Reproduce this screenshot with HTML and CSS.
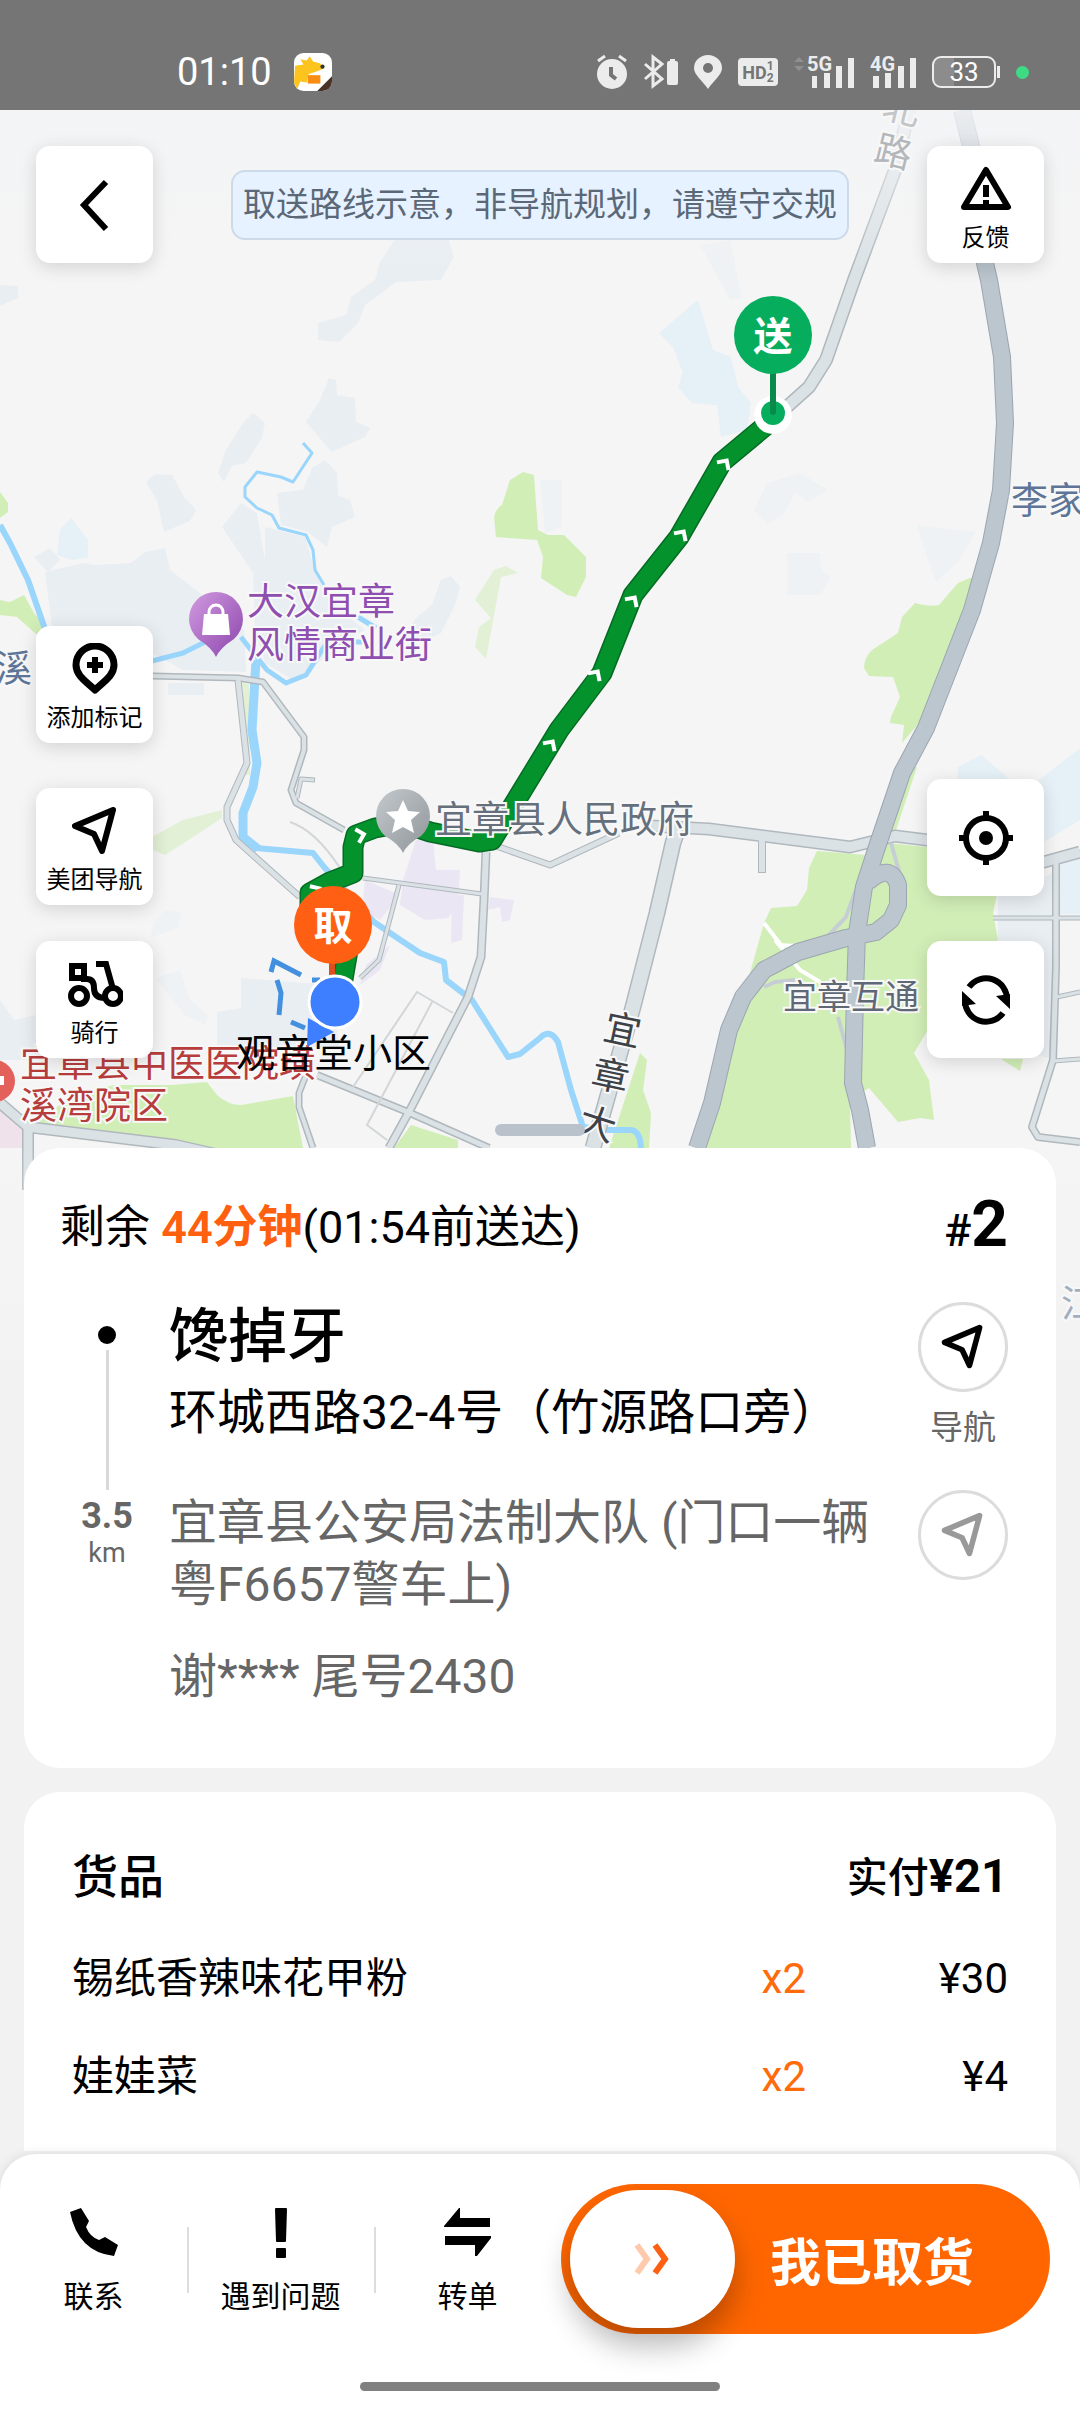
FILE: index.html
```html
<!DOCTYPE html>
<html lang="zh-CN">
<head>
    <meta charset="UTF-8">
    <meta name="viewport" content="width=device-width, initial-scale=1.0">
    <title>配送详情</title>
    <link rel="stylesheet" href="styles.css">
</head>
<body>
    <svg class="symbols" aria-hidden="true">
        <symbol id="icon-send" viewBox="0 0 56 52">
            <path d="M46 5 L8 21 L27 29 L35 46 Z" fill="none" stroke="currentColor" stroke-width="6" stroke-linejoin="round"/>
        </symbol>
    </svg>

    <!-- 状态栏 -->
    <header class="status-bar">
        <span class="clock">01:10</span>
        <svg class="app-icon" viewBox="0 0 36 36">
            <rect width="36" height="36" rx="9" fill="#fff"/>
            <path d="M1 12 L9 11 L6 6 L12 7 L15 3 L18 8 L25 10 L28 15 L20 18 L14 20 L13 23 L12 28 L6 27 L3 34 L0 28 Z" fill="#fcc41c"/>
            <rect x="13" y="21" width="12" height="8" fill="#f98c13"/>
            <circle cx="27" cy="13" r="2" fill="#333"/>
            <path d="M36 22 L22 36 H27 A9 9 0 0 0 36 27 Z" fill="#4a3228"/>
        </svg>
        <div class="status-icons">
            <svg width="32" height="36" viewBox="0 0 32 36">
                <circle cx="16" cy="20" r="15" fill="#ececec"/>
                <path d="M2 7 L9 2 M30 7 L23 2" stroke="#ececec" stroke-width="3"/>
                <path d="M15 13 V21 L20 25" fill="none" stroke="#757575" stroke-width="4"/>
            </svg>
            <svg width="34" height="36" viewBox="0 0 34 36">
                <path d="M1 10 L18 25 L9 32 V3 L18 10 L1 25" fill="none" stroke="#ececec" stroke-width="3"/>
                <rect x="23" y="7" width="11" height="24" rx="2" fill="#ececec"/>
                <rect x="26" y="5" width="5" height="3" fill="#ececec"/>
            </svg>
            <svg width="28" height="36" viewBox="0 0 28 36">
                <path d="M14 35 C8 26 0 21 0 14 A14 13 0 0 1 28 14 C28 21 20 26 14 35 Z" fill="#ececec"/>
                <circle cx="14" cy="14" r="5" fill="#757575"/>
            </svg>
            <span class="hd-badge">HD<span class="hd-sims"><span>1</span><span>2</span></span></span>
            <svg class="signal" width="60" height="36" viewBox="0 0 60 36">
                <path d="M0 8 L5 3 L10 8 Z M0 12 L5 17 L10 12 Z" fill="#8f8f8f"/>
                <path d="M18 22 h5 v12 h-5 z M30 19 h6 v15 h-6 z M42 12 h6 v22 h-6 z M54 4 h6 v30 h-6 z" fill="#ececec"/>
                <text x="13" y="17" class="net">5G</text>
            </svg>
            <svg class="signal" width="46" height="36" viewBox="0 0 46 36">
                <path d="M3 22 h6 v12 h-6 z M15 19 h6 v15 h-6 z M28 12 h6 v22 h-6 z M40 4 h6 v30 h-6 z" fill="#ececec"/>
                <text x="0" y="17" class="net">4G</text>
            </svg>
            <span class="battery">33</span>
            <span class="mic-dot"></span>
        </div>
    </header>

    <main class="content">
        <!-- 地图底图 -->
        <svg class="map" viewBox="0 110 1080 1490" preserveAspectRatio="xMidYMin slice">
            <defs>
                <linearGradient id="purplePin" x1="0" y1="0" x2="1" y2="1">
                    <stop offset="0" stop-color="#d29be0"/>
                    <stop offset="1" stop-color="#8b45ac"/>
                </linearGradient>
                <linearGradient id="grayPin" x1="0" y1="0" x2="1" y2="1">
                    <stop offset="0" stop-color="#c3c9cd"/>
                    <stop offset="1" stop-color="#8f9599"/>
                </linearGradient>
                <linearGradient id="topFade" x1="0" y1="0" x2="0" y2="1">
                    <stop offset="0" stop-color="#f3f4f6" stop-opacity=".85"/>
                    <stop offset="1" stop-color="#f3f4f6" stop-opacity="0"/>
                </linearGradient>
                <linearGradient id="bottomFade" x1="0" y1="0" x2="0" y2="1">
                    <stop offset="0" stop-color="#f2f2f2" stop-opacity="0"/>
                    <stop offset="1" stop-color="#f2f2f2"/>
                </linearGradient>
            </defs>
            <rect y="110" width="1080" height="1490" fill="#f5f5f5"/>

            <!-- 居民区 -->
            <g fill="#e9eef3">
                <path d="M396 238 L448 238 L454 257 L441 280 L396 282 L365 305 L358 323 L339 342 L318 340 L318 323 L346 315 L351 297 L375 280 L380 262 Z"/>
                <path d="M320 400 L329 378 L336 380 L337 395 L355 398 L356 422 L370 428 L365 437 L332 452 L306 422 Z"/>
                <path d="M243 423 L253 413 L265 423 L262 438 L246 463 L232 466 L224 482 L218 473 L226 450 Z"/>
                <path d="M146 482 L155 474 L172 475 L184 497 L196 510 L190 521 L164 532 L157 500 Z"/>
                <path d="M325 460 L337 473 L338 495 L350 500 L355 517 L332 527 L327 547 L308 532 L281 525 L277 493 L303 490 L312 468 Z"/>
                <path d="M241 503 L257 513 L265 560 L265 527 L305 537 L315 570 L344 613 L365 630 L340 643 L322 660 L293 680 L265 663 L255 630 L253 573 L222 527 Z"/>
                <path d="M45 572 L83 563 L95 565 L131 563 L145 552 L165 548 L170 570 L213 603 L244 630 L246 672 L183 670 L152 653 L52 627 Z"/>
                <path d="M34 557 L50 548 L60 560 L48 572 Z"/>
                <path d="M441 580 L451 576 L460 587 L455 605 L441 633 L424 642 L400 640 L417 617 L432 605 Z"/>
                <path d="M168 683 h36 v12 h-36 z"/>
                <path d="M0 285 L18 286 L18 298 L0 306 Z"/>
                <path d="M241 978 L330 985 L340 1050 L217 1045 L217 1012 L241 1008 Z"/>
                <path d="M0 1000 L14 1020 L36 1015 L36 1060 L0 1060 Z"/>
                <path d="M998 897 L1055 872 V1060 L1020 1050 L998 940 Z"/>
            </g>
            <g fill="#eff2f4">
                <path d="M540 480 h22 v47 l-17 6 z"/>
                <path d="M754 510 L767 483 L800 473 L828 490 L808 502 L795 493 L783 515 L768 524 Z"/>
                <path d="M787 553 H820 L822 570 L831 577 L820 595 H787 Z"/>
                <path d="M917 525 L976 532 L958 562 L936 582 L928 560 Z"/>
                <path d="M700 245 L730 240 L742 298 L730 300 Z"/>
                <path d="M155 978 L180 970 L190 1000 L208 1015 L205 1025 L185 1015 Z"/>
                <path d="M155 920 L165 910 L182 912 L178 928 L150 938 Z"/>
            </g>
            <g fill="#e6f0f7">
                <path d="M659 333 L698 300 L709 337 L713 350 L731 357 L738 387 L751 403 L747 430 L721 437 L717 405 L692 403 L678 387 L683 373 L673 347 Z"/>
                <path d="M71 518 L88 540 V558 L72 560 L57 555 L60 530 Z"/>
                <path d="M958 767 L981 755 L1008 778 V800 H958 Z"/>
                <path d="M1039 780 L1080 748 V820 L1044 842 Z"/>
                <path d="M1059 864 L1080 858 V914 H1059 Z"/>
            </g>
            <path d="M0 1095 L26 1128 V1148 H0 Z" fill="#f0e2ea"/>

            <!-- 绿地 -->
            <g fill="#d2eeb7">
                <path d="M494 517 Q496 508 502 505 L510 480 L523 472 L534 475 L538 530 L548 535 L564 535 L586 557 V577 L576 597 L567 595 L541 578 L543 557 L537 540 L496 537 Z"/>
                <path d="M0 492 L8 503 L8 512 L0 518 Z"/>
                <path d="M0 600 L10 602 L24 595 L34 613 L50 630 L36 634 L17 617 L0 615 Z"/>
                <path d="M114 1085 L172 1085 L207 1082 L217 1095 Q228 1105 241 1105 L293 1096 L303 1148 H207 L176 1140 L38 1123 L69 1097 Z"/>
                <path d="M411 1125 L458 1140 V1148 H394 Z"/>
                <path d="M640 1053 L647 1060 L643 1090 L651 1113 L649 1148 H609 Z"/>
                <path d="M970 578 L958 583 L939 605 Q930 607 915 603 L902 617 L898 633 L872 650 Q864 658 864 668 L869 676 L893 677 L900 697 L891 717 L890 723 L904 725 L902 743 L930 710 L985 580 Z"/>
                <path d="M917 767 L896 830 L888 845 L884 838 L905 770 Z"/>
                <path d="M817 851 L867 855 L888 843 L927 847 L998 890 L993 913 L998 940 L926 1033 L914 1053 L929 1080 L934 1120 L920 1118 L898 1122 L869 1088 L850 1100 L851 1148 H705 L736 1033 L750 973 L764 923 L771 908 L797 906 L807 890 L809 868 Z"/>
                <path d="M1001 1059 L1020 1071 L1023 1059 Z"/>
            </g>
            <g fill="#e2f0d5">
                <path d="M494 570 L506 566 L518 573 L501 577 L486 659 L475 647 L479 627 L491 618 L475 600 Z"/>
                <path d="M152 837 L183 820 L222 810 V818 L193 837 L165 855 L153 850 Z"/>
                <path d="M242 682 L249 684 L250 775 L246 775 Z"/>
            </g>

            <!-- 商业区 -->
            <g fill="#ebe6f4">
                <path d="M416 840 L433 838 L436 870 L460 870 L458 905 L448 918 L425 920 L400 905 L403 880 Z"/>
                <path d="M452 895 L464 895 L462 940 L451 943 Z"/>
                <path d="M490 897 L514 900 L510 920 L502 922 L500 907 L488 910 Z"/>
                <path d="M365 880 L400 895 L380 920 L362 910 Z"/>
                <path d="M366 965 L390 945 L380 970 L360 985 Z"/>
            </g>

            <!-- 河流 -->
            <g fill="none" stroke="#9ad5fb" stroke-linejoin="round">
                <path d="M0 525 L10 543 L28 580 L46 632" stroke-width="6"/>
                <path d="M303 443 L312 453 L293 482 L281 477 L257 472 L245 487 V497 L257 508 L272 515 L279 528 L306 535 L313 550 L315 570 L324 585" stroke-width="3"/>
                <path d="M152 661 L183 653 L205 642 M241 637 L251 650 L267 670 L286 683 L306 675 L324 647 L340 642 L362 642 M358 617 L376 628" stroke-width="5"/>
                <path d="M256 660 L252 730 L257 763 L253 787 L243 813 L243 837 L258 849" stroke-width="9"/>
                <path d="M256 848 L313 853 L324 867 L374 922 L396 937 L420 953 L444 962 L446 980 L472 1000 L489 1027 L508 1057 L520 1054 L540 1038 Q550 1028 558 1042 L571 1090 L583 1127 L609 1130 H630 Q640 1130 641 1148" stroke-width="6"/>
            </g>

            <!-- 普通道路：先描边再填充 -->
            <g fill="none" stroke="#b0b8bd" stroke-linejoin="round">
                <path d="M909 110 L895 170 L854 280 L826 360 L809 387 L780 413" stroke-width="14"/>
                <path d="M678 828 L673 843 L657 913 L633 1007 L593 1148" stroke-width="17"/>
                <path d="M650 826 L709 829 L850 847 L895 836 L927 840 L1044 862 L1080 852" stroke-width="13"/>
                <path d="M762 842 V873" stroke-width="8"/>
                <path d="M619 833 L550 865 L499 847 L470 838" stroke-width="7"/>
                <path d="M152 676 L238 678 L263 682 L304 737 V750 L291 790 L296 803 L344 830" stroke-width="7"/>
                <path d="M238 680 L247 763 L227 807 V820 L236 840 L300 897" stroke-width="7"/>
                <path d="M297 798 L301 779 L315 780" stroke-width="5"/>
                <path d="M486 852 L484 900 L481 957 L468 997 L410 1110 L389 1148" stroke-width="9"/>
                <path d="M317 1075 L410 1113 L489 1148" stroke-width="8"/>
                <path d="M308 1070 L299 1093 V1107 L313 1148" stroke-width="7"/>
                <path d="M363 878 L482 894 M399 885 L379 960 L360 978" stroke-width="5"/>
                <path d="M0 1103 L28 1127 L69 1132 L176 1145 L220 1155 M28 1127 V1190" stroke-width="12"/>
                <path d="M1056 863 V967 L1053 1060 L1032 1127 L1038 1137 L1080 1142" stroke-width="8"/>
                <path d="M993 918 H1080 M1057 997 L1080 992 M1053 1061 L1080 1059" stroke-width="5"/>
            </g>
            <g fill="none" stroke="#dbe2e6" stroke-linejoin="round">
                <path d="M909 110 L895 170 L854 280 L826 360 L809 387 L780 413" stroke-width="11"/>
                <path d="M678 828 L673 843 L657 913 L633 1007 L593 1148" stroke-width="14"/>
                <path d="M650 826 L709 829 L850 847 L895 836 L927 840 L1044 862 L1080 852" stroke-width="10"/>
                <path d="M762 840 V872" stroke-width="6"/>
                <path d="M619 833 L550 865 L499 847 L470 838" stroke-width="5"/>
                <path d="M152 676 L238 678 L263 682 L304 737 V750 L291 790 L296 803 L344 830" stroke-width="4"/>
                <path d="M238 680 L247 763 L227 807 V820 L236 840 L300 897" stroke-width="5"/>
                <path d="M297 798 L301 779 L314 780" stroke-width="3"/>
                <path d="M486 852 L484 900 L481 957 L468 997 L410 1110 L389 1148" stroke-width="6"/>
                <path d="M317 1075 L410 1113 L489 1148" stroke-width="5"/>
                <path d="M308 1070 L299 1093 V1107 L313 1148" stroke-width="4"/>
                <path d="M363 878 L482 894 M399 885 L379 960 L360 978" stroke-width="3"/>
                <path d="M0 1103 L28 1127 L69 1132 L176 1145 L220 1155 M28 1127 V1190" stroke-width="9"/>
                <path d="M1056 863 V967 L1053 1060 L1032 1127 L1038 1137 L1080 1142" stroke-width="5"/>
                <path d="M993 918 H1080 M1057 997 L1080 992 M1053 1061 L1080 1059" stroke-width="3"/>
            </g>
            <g fill="none" stroke="#d3d6d8" stroke-width="2">
                <path d="M453 1013 L417 992 L353 1087 M432 1002 L367 1125 L387 1140"/>
                <path d="M290 822 Q315 830 340 868"/>
            </g>
            <g fill="none" stroke="#fff" stroke-width="4">
                <path d="M764 923 L781 945 Q805 948 826 938 M775 940 L800 970 L820 982"/>
            </g>
            <g fill="none" stroke="#c6ced4" stroke-width="4">
                <path d="M862 873 L846 917 L826 938 M891 843 L901 878 M764 987 L775 982 L795 980 M838 1017 L847 1050"/>
            </g>

            <!-- 高速 -->
            <g fill="none" stroke="#9ba6b1" stroke-width="18" stroke-linejoin="round">
                <path d="M962 110 L971 146 L985 263 L989 280 L1002 357 L1005 423 L1001 490 L991 543 L972 610 L926 728 L902 773 L876 850 L864 887 L857 933 L855 993 L853 1083 L860 1110 L867 1148"/>
                <path d="M868 882 Q890 862 898 885 V905 L891 920 L876 932 L846 938 L798 952 L764 970 L743 997 L729 1030 L712 1103 L697 1148"/>
            </g>
            <g fill="none" stroke="#bcc6cf" stroke-width="16" stroke-linejoin="round">
                <path d="M962 110 L971 146 L985 263 L989 280 L1002 357 L1005 423 L1001 490 L991 543 L972 610 L926 728 L902 773 L876 850 L864 887 L857 933 L855 993 L853 1083 L860 1110 L867 1148"/>
                <path d="M868 882 Q890 862 898 885 V905 L891 920 L876 932 L846 938 L798 952 L764 970 L743 997 L729 1030 L712 1103 L697 1148"/>
            </g>

            <!-- 小区边界 -->
            <g fill="none" stroke="#4390df" stroke-width="5">
                <path d="M271 972 L274 961 L301 975 M277 980 L281 993 L279 1015 M291 1022 L305 1028 M312 980 L320 980"/>
            </g>

            <!-- 配送路线 -->
            <g fill="none" stroke-linejoin="round" stroke-linecap="round">
                <path d="M773 418 L764 427 L722 462 L679 537 L633 595 L602 673 L559 730 L492 840 L479 842 L430 832 L403 823 L375 828 L356 835 L353 847 V873 L330 882 L310 893 V925 L351 933 L342 985" stroke="#056b24" stroke-width="21"/>
                <path d="M773 418 L764 427 L722 462 L679 537 L633 595 L602 673 L559 730 L492 840 L479 842 L430 832 L403 823 L375 828 L356 835 L353 847 V873 L330 882 L310 893 V925 L351 933 L342 985" stroke="#04922c" stroke-width="18"/>
            </g>
            <g fill="none" stroke="#fff" stroke-width="4">
                <path d="M-4 -7 L3 0 L-4 7" transform="translate(725 463) rotate(-56)"/>
                <path d="M-4 -7 L3 0 L-4 7" transform="translate(682 534) rotate(-56)"/>
                <path d="M-4 -7 L3 0 L-4 7" transform="translate(633 600) rotate(-56)"/>
                <path d="M-4 -7 L3 0 L-4 7" transform="translate(596 674) rotate(-56)"/>
                <path d="M-4 -7 L3 0 L-4 7" transform="translate(551 744) rotate(-56)"/>
                <path d="M-4 -7 L3 0 L-4 7" transform="translate(361 835) rotate(-15)"/>
                <path d="M-4 -7 L3 0 L-4 7" transform="translate(317 890) rotate(-32)"/>
            </g>

            <rect y="110" width="1080" height="160" fill="url(#topFade)"/>
            <rect y="1148" width="1080" height="240" fill="url(#bottomFade)"/>
            <rect y="1387" width="1080" height="213" fill="#f2f2f2"/>

            <!-- 地名 -->
            <g class="labels">
                <text x="247" y="615" fill="#8e4fb0">大汉宜章</text>
                <text x="247" y="658" fill="#8e4fb0">风情商业街</text>
                <text x="435" y="833" fill="#66707c">宜章县人民政府</text>
                <text x="1011" y="514" fill="#5f7597">李家</text>
                <text x="-5" y="682" fill="#5f7597">溪</text>
                <text x="783" y="1009" fill="#5f6975" class="small">宜章互通</text>
                <text x="-18" y="13" fill="#3c4248" transform="translate(622 1030) rotate(12)">宜</text>
                <text x="-18" y="13" fill="#3c4248" transform="translate(610 1076) rotate(12)">章</text>
                <text x="-18" y="13" fill="#3c4248" transform="translate(597 1124) rotate(18)">大</text>
                <text x="-18" y="13" fill="#c3c6c9" transform="translate(901 109) rotate(14)">北</text>
                <text x="-18" y="13" fill="#b3b7ba" transform="translate(893 152) rotate(14)">路</text>
                <text x="20" y="1077" fill="#b73c3c">宜章县中医医院璜</text>
                <text x="20" y="1119" fill="#b73c3c">溪湾院区</text>
                <text x="1061" y="1317" fill="#a3aec1">江</text>
            </g>

            <!-- 兴趣点 -->
            <path d="M216 657 Q212 648 198 639 A27 27 0 1 1 234 639 Q220 648 216 657 Z" fill="url(#purplePin)"/>
            <path d="M204 614 h24 l2 21 h-28 z" fill="#fff"/>
            <path d="M209 615 v-3 a7 7 0 0 1 14 0 v3" fill="none" stroke="#fff" stroke-width="3"/>
            <path d="M403 853 Q399 844 385 836 A27 27 0 1 1 421 836 Q407 844 403 853 Z" fill="url(#grayPin)"/>
            <path d="M403 800 L408 811 L420 812 L411 820 L414 833 L403 827 L392 833 L395 820 L386 812 L398 811 Z" fill="#fff"/>
            <circle cx="-6" cy="1081" r="21" fill="#e4605a"/>
            <rect x="-8" y="1076" width="12" height="9" fill="#fff"/>

            <!-- 送达点 -->
            <circle cx="773" cy="415" r="19" fill="#fff"/>
            <circle cx="773" cy="413" r="12" fill="#06ad5d"/>
            <path d="M773 370 V412" stroke="#0a8a4a" stroke-width="6" stroke-linecap="round"/>
            <circle cx="773" cy="335" r="39" fill="#06ad5d"/>
            <text x="773" y="350" class="pin-text">送</text>

            <!-- 取货点和当前位置 -->
            <path d="M332 960 V985" stroke="#dd4f1c" stroke-width="6"/>
            <circle cx="333" cy="925" r="39" fill="#ff5f13"/>
            <text x="333" y="940" class="pin-text">取</text>
            <text x="236" y="1067" class="area-name">观音堂小区</text>
            <path d="M308 1018 L307 1047 L334 1032 Z" fill="#3d7fff"/>
            <circle cx="335" cy="1002" r="26" fill="#3d7fff" stroke="#fff" stroke-width="3"/>
        </svg>

        <!-- 地图上的控件 -->
        <div class="map-tools">
            <div class="top-row">
                <button class="tool tool-plain" aria-label="返回">
                    <svg width="56" height="56" viewBox="0 0 56 56"><path d="M39 5 L17 28 L39 52" fill="none" stroke="#000" stroke-width="6"/></svg>
                </button>
                <p class="notice">取送路线示意，非导航规划，请遵守交规</p>
                <button class="tool">
                    <svg width="56" height="52" viewBox="0 0 56 52">
                        <path d="M28 7 L50 44 H6 Z" fill="none" stroke="#000" stroke-width="6" stroke-linejoin="round"/>
                        <path d="M28 22 V34 M28 37 V44" stroke="#000" stroke-width="6"/>
                    </svg>
                    <span>反馈</span>
                </button>
            </div>
            <div class="side-row">
                <div class="side-left">
                    <button class="tool">
                        <svg width="56" height="52" viewBox="0 0 56 52">
                            <path d="M28 47 C20 39 9 33 9 22 A19 19 0 0 1 47 22 C47 33 36 39 28 47 Z" fill="none" stroke="#000" stroke-width="7" stroke-linejoin="round"/>
                            <path d="M28 14 V30 M20 22 H36" stroke="#000" stroke-width="6"/>
                        </svg>
                        <span>添加标记</span>
                    </button>
                    <div class="side-group">
                        <button class="tool">
                            <svg width="56" height="52"><use href="#icon-send"/></svg>
                            <span>美团导航</span>
                        </button>
                        <button class="tool">
                            <svg width="56" height="52" viewBox="0 0 56 52">
                                <g fill="none" stroke="#000" stroke-width="6">
                                    <rect x="5" y="8" width="12" height="12"/>
                                    <circle cx="12" cy="38" r="8"/>
                                    <circle cx="46" cy="38" r="8"/>
                                    <path d="M14 21 H20 Q27 21 27 30 Q27 40 38 40 M29 6 H39 L46 31"/>
                                </g>
                            </svg>
                            <span>骑行</span>
                        </button>
                    </div>
                </div>
                <div class="side-right">
                    <button class="tool tool-plain" aria-label="定位">
                        <svg width="56" height="56" viewBox="0 0 56 56">
                            <circle cx="28" cy="28" r="20" fill="none" stroke="#000" stroke-width="6"/>
                            <circle cx="28" cy="28" r="7"/>
                            <path d="M28 1 V9 M28 47 V55 M1 28 H9 M47 28 H55" stroke="#000" stroke-width="6"/>
                        </svg>
                    </button>
                    <button class="tool tool-plain" aria-label="刷新">
                        <svg width="56" height="56" viewBox="-28 -28 56 56">
                            <path d="M-17 -13 A21 21 0 0 1 21 0 M17 13 A21 21 0 0 1 -21 0" fill="none" stroke="#000" stroke-width="6"/>
                            <path d="M10 -4 L24 9 V-6 Z M-10 4 L-24 -9 V6 Z"/>
                        </svg>
                    </button>
                </div>
            </div>
            <div class="sheet-handle"></div>
        </div>

        <!-- 订单卡片 -->
        <section class="card order-card">
            <div class="order-head">
                <p>剩余 <strong>44分钟</strong>(01:54前送达)</p>
                <p class="order-no">#<b>2</b></p>
            </div>
            <div class="stop">
                <div class="rail">
                    <span class="rail-dot"></span>
                    <span class="rail-line"></span>
                </div>
                <div class="stop-body pickup">
                    <h1>馋掉牙</h1>
                    <p>环城西路32-4号（竹源路口旁）</p>
                </div>
                <div class="stop-nav">
                    <button class="nav-btn" aria-labelledby="nav-label"><svg width="52" height="48"><use href="#icon-send"/></svg></button>
                    <span id="nav-label">导航</span>
                </div>
            </div>
            <div class="stop">
                <div class="rail distance">
                    <b>3.5</b>
                    <span>km</span>
                </div>
                <div class="stop-body dropoff">
                    <p>宜章县公安局法制大队 (门口一辆粤F6657警车上)</p>
                    <p class="customer">谢**** 尾号2430</p>
                </div>
                <div class="stop-nav">
                    <button class="nav-btn nav-btn-gray" aria-label="导航到送达点"><svg width="52" height="48"><use href="#icon-send"/></svg></button>
                </div>
            </div>
        </section>

        <!-- 货品卡片 -->
        <section class="card goods-card">
            <div class="goods-head">
                <h2>货品</h2>
                <p>实付<b>¥21</b></p>
            </div>
            <table class="goods">
                <tr>
                    <td>锡纸香辣味花甲粉</td>
                    <td class="qty">x2</td>
                    <td class="price">¥30</td>
                </tr>
                <tr>
                    <td>娃娃菜</td>
                    <td class="qty">x2</td>
                    <td class="price">¥4</td>
                </tr>
            </table>
        </section>
    </main>

    <!-- 底部操作栏 -->
    <footer class="bottom-bar">
        <div class="bar-row">
            <div class="actions">
                <button class="action">
                    <svg width="48" height="50" viewBox="0 0 48 50"><path d="M0 4 L11 0 L19 13 L16 19 Q20 29 29 32 L35 29 L48 37 L44 48 Q8 44 0 4 Z"/></svg>
                    <span>联系</span>
                </button>
                <button class="action">
                    <svg width="48" height="50" viewBox="0 0 48 50">
                        <path d="M18 1 Q18 0 19 0 H29 Q30 0 30 1 L29 33 Q29 34 28 34 H20 Q19 34 19 33 Z"/>
                        <rect x="19" y="40" width="10" height="10" rx="1"/>
                    </svg>
                    <span>遇到问题</span>
                </button>
                <button class="action">
                    <svg width="48" height="50" viewBox="0 0 48 50"><path d="M15 0 H16 V10 H46 V19 H0 V18 Z M1 28 H47 V30 L33 48 H31 V37 H1 Z"/></svg>
                    <span>转单</span>
                </button>
            </div>
            <button class="slide-btn">
                <span class="knob">
                    <svg width="40" height="32" viewBox="0 0 40 32">
                        <path d="M4 2 L14 16 L4 30" fill="none" stroke="#ffc9ab" stroke-width="6"/>
                        <path d="M22 2 L32 16 L22 30" fill="none" stroke="#ff5f13" stroke-width="6"/>
                    </svg>
                </span>
                <span class="slide-text">我已取货</span>
            </button>
        </div>
        <div class="home-indicator"></div>
    </footer>
</body>
</html>
```
FILE: styles.css
```css
* {
    box-sizing: border-box;
}

body {
    margin: 0;
    min-height: 100vh;
    display: flex;
    flex-direction: column;
    background-color: #f2f2f2;
    color: #000;
    font-family: Roboto, "Noto Sans CJK SC", sans-serif;
}

p, h1, h2 {
    margin: 0;
}

button {
    border: none;
    padding: 0;
    background: none;
    color: inherit;
    font-family: inherit;
    cursor: pointer;
}

.symbols {
    position: absolute;
    width: 0;
    height: 0;
}

/* 状态栏 */
.status-bar {
    display: flex;
    align-items: center;
    height: 110px;
    padding: 34px 51px 0 177px;
    background-color: #757575;
    color: #fff;
}

.clock {
    font-size: 38px;
}

.app-icon {
    width: 38px;
    height: 38px;
    margin-left: 22px;
}

.status-icons {
    display: flex;
    align-items: center;
    gap: 16px;
    margin-left: auto;
}

.signal {
    overflow: visible;
}

.hd-badge {
    display: flex;
    align-items: center;
    justify-content: center;
    width: 40px;
    height: 28px;
    border-radius: 4px;
    background-color: #ececec;
    color: #757575;
    font-size: 18px;
    font-weight: bold;
}

.hd-sims {
    display: flex;
    flex-direction: column;
    font-size: 12px;
    line-height: 12px;
}

.net {
    font-size: 20px;
    font-weight: bold;
    fill: #ececec;
    stroke: #757575;
    stroke-width: 2px;
    paint-order: stroke;
}

.battery {
    position: relative;
    width: 64px;
    height: 32px;
    margin-right: 4px;
    border: 2px solid #ececec;
    border-radius: 9px;
    background: linear-gradient(90deg, #8c8c8c 33%, #757575 33%);
    font-size: 26px;
    line-height: 28px;
    text-align: center;
}

.battery::after {
    content: "";
    position: absolute;
    top: 8px;
    right: -6px;
    width: 3px;
    height: 12px;
    background-color: #ececec;
}

.mic-dot {
    width: 13px;
    height: 13px;
    border-radius: 50%;
    background-color: #3ddc84;
}

/* 地图 */
.content {
    position: relative;
    flex: 1;
    display: flex;
    flex-direction: column;
}

.map {
    position: absolute;
    top: 0;
    left: 0;
    width: 100%;
    height: 1490px;
}

.labels text {
    font-size: 37px;
    stroke: #f8f8f8;
    stroke-width: 4px;
    paint-order: stroke;
}

.labels .small {
    font-size: 34px;
}

.pin-text {
    font-size: 39px;
    font-weight: bold;
    fill: #fff;
    text-anchor: middle;
}

.area-name {
    font-size: 39px;
}

.map-tools {
    position: relative;
    padding: 36px 36px 12px;
}

.top-row {
    display: flex;
    justify-content: space-between;
    align-items: center;
}

.notice {
    padding: 0 10px;
    border: 2px solid #cddaea;
    border-radius: 14px;
    background-color: #e6f2ff;
    color: #5b6878;
    font-size: 33px;
    line-height: 66px;
    white-space: nowrap;
}

.tool {
    display: flex;
    flex-direction: column;
    align-items: center;
    width: 117px;
    height: 117px;
    padding-top: 17px;
    gap: 8px;
    border-radius: 14px;
    background-color: #fff;
    box-shadow: 0 4px 18px rgba(0, 0, 0, 0.14);
    font-size: 24px;
    line-height: 30px;
}

.tool-plain {
    justify-content: center;
    padding-top: 0;
}

.side-row {
    display: flex;
    justify-content: space-between;
    align-items: flex-end;
    margin-top: 363px;
}

.side-left,
.side-right {
    display: flex;
    flex-direction: column;
    gap: 45px;
}

.side-group {
    display: flex;
    flex-direction: column;
    gap: 36px;
}

.sheet-handle {
    width: 90px;
    height: 12px;
    margin: 66px auto 0;
    border-radius: 6px;
    background-color: #b9c2cb;
}

/* 卡片 */
.card {
    position: relative;
    margin: 0 24px;
    background-color: #fff;
}

.order-card {
    padding: 45px 48px 60px 36px;
    border-radius: 36px;
}

.order-head {
    display: flex;
    justify-content: space-between;
    align-items: center;
    height: 70px;
    margin-bottom: 39px;
    font-size: 45px;
    line-height: 70px;
}

.order-head strong {
    color: #ff6010;
    font-weight: 600;
}

.order-no {
    font-weight: 500;
}

.order-no b {
    font-size: 64px;
}

.stop {
    display: grid;
    grid-template-columns: 94px 1fr 90px;
    column-gap: 15px;
}

.rail {
    display: flex;
    flex-direction: column;
    align-items: center;
}

.rail-dot {
    width: 18px;
    height: 18px;
    margin: 24px 0 6px;
    border-radius: 50%;
    background-color: #000;
}

.rail-line {
    flex: 1;
    width: 3px;
    background-color: #d9d9d9;
}

.distance {
    padding-top: 6px;
    color: #666;
    font-size: 27px;
    line-height: 34px;
}

.distance b {
    font-size: 36px;
    line-height: 40px;
}

.stop-body {
    font-size: 48px;
    line-height: 62px;
}

.pickup {
    padding-bottom: 46px;
}

.pickup h1 {
    margin-bottom: 10px;
    font-size: 59px;
    font-weight: 500;
    line-height: 70px;
}

.dropoff {
    padding-top: 2px;
    color: #666;
}

.customer {
    margin-top: 30px;
}

.stop-nav {
    display: flex;
    flex-direction: column;
    align-items: center;
    gap: 16px;
    color: #666;
    font-size: 33px;
    line-height: 40px;
}

.nav-btn {
    display: flex;
    align-items: center;
    justify-content: center;
    width: 90px;
    height: 90px;
    border: 3px solid #dcdcdc;
    border-radius: 50%;
    color: #000;
}

.nav-btn-gray {
    color: #999;
}

.goods-card {
    flex: 1;
    margin-top: 24px;
    margin-bottom: 3px;
    padding: 50px 48px 23px;
    border-radius: 36px 36px 0 0;
}

.goods-head {
    display: flex;
    justify-content: space-between;
    align-items: center;
    height: 70px;
    margin-bottom: 18px;
    font-size: 41px;
    font-weight: 500;
    line-height: 70px;
}

.goods-head h2 {
    font-size: 46px;
    font-weight: 500;
}

.goods-head b {
    font-size: 47px;
}

.goods {
    width: 100%;
    border-collapse: collapse;
    font-size: 42px;
    line-height: 98px;
}

.goods td {
    padding: 0;
    vertical-align: baseline;
}

.goods .qty {
    width: 44px;
    color: #ff6a0a;
}

.goods .price {
    width: 202px;
    text-align: right;
}

/* 底部操作栏 */
.bottom-bar {
    position: relative;
    padding: 30px 0 21px;
    border-radius: 36px 36px 0 0;
    background-color: #fff;
    box-shadow: 0 0 12px rgba(0, 0, 0, 0.1);
}

.bar-row {
    display: flex;
    padding-right: 30px;
}

.actions {
    flex: 1;
    display: grid;
    grid-template-columns: repeat(3, 1fr);
}

.action {
    display: flex;
    flex-direction: column;
    align-items: center;
    gap: 19px;
    padding-top: 24px;
    font-size: 30px;
    line-height: 40px;
}

.action + .action {
    background: linear-gradient(#ddd, #ddd) 0 43px / 2px 66px no-repeat;
}

.slide-btn {
    display: flex;
    align-items: center;
    width: 489px;
    height: 150px;
    padding: 6px 9px;
    border-radius: 75px;
    background-color: #ff6600;
    color: #fff;
}

.knob {
    display: flex;
    align-items: center;
    justify-content: center;
    width: 165px;
    height: 138px;
    border-radius: 69px;
    background-color: #fff;
    box-shadow: 0 18px 30px rgba(0, 0, 0, 0.28);
}

.slide-text {
    margin-left: 35px;
    font-size: 51px;
    font-weight: 600;
}

.home-indicator {
    width: 360px;
    height: 9px;
    margin: 48px auto 0;
    border-radius: 5px;
    background-color: #808080;
}
```
